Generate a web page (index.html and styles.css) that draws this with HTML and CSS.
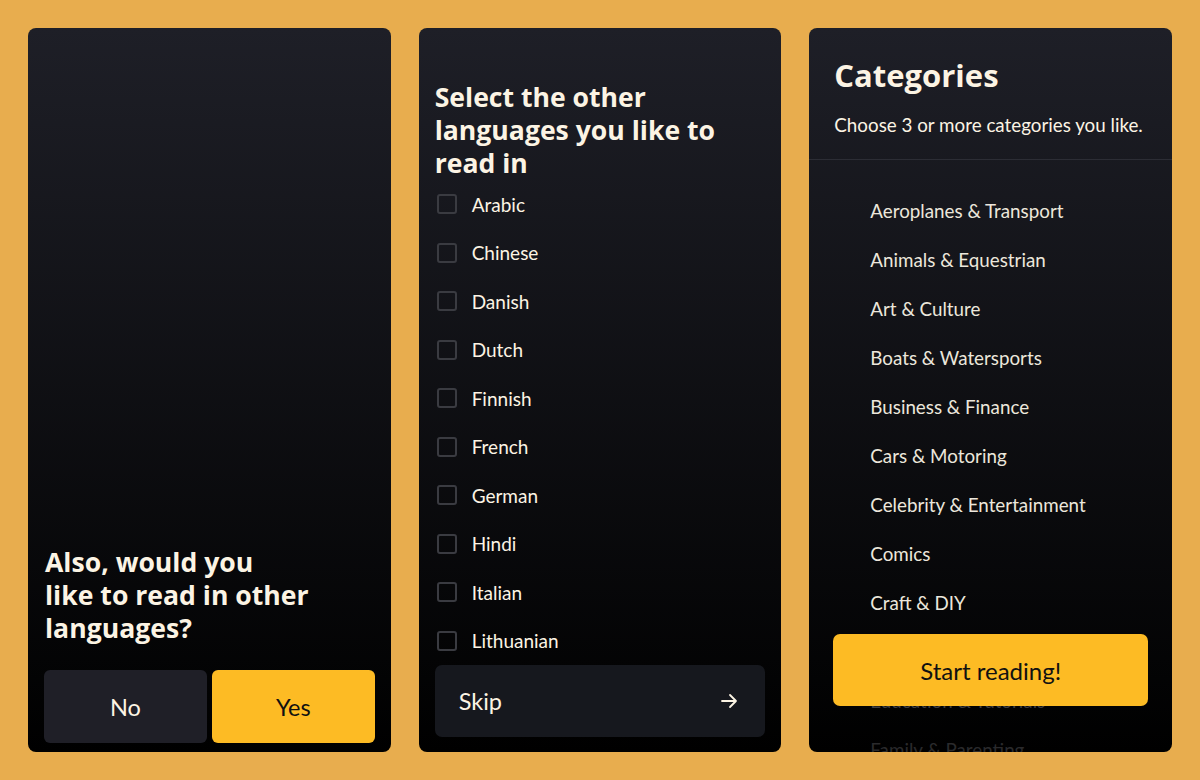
FILE: index.html
```html
<!DOCTYPE html>
<html lang="en">
<head>
  <meta charset="UTF-8" />
  <meta name="viewport" content="width=device-width, initial-scale=1.0"/>
  <title>Onboarding - Reader</title>
  <link rel="stylesheet" href="styles.css">
</head>
<body>
  <!-- step 1: ask about other languages -->
  <section class="panel ask-panel">
    <h2 class="ask-title">Also, would you<br>like to read in other<br>languages?</h2>
    <div class="ask-buttons">
      <button class="btn btn-dark">No</button>
      <button class="btn btn-yellow">Yes</button>
    </div>
  </section>

  <!-- step 2: pick languages -->
  <section class="panel lang-panel">
    <h2 class="lang-title">Select the other<br>languages you like to<br>read in</h2>
    <ul class="lang-list">
      <li><span class="checkbox"></span>Arabic</li>
      <li><span class="checkbox"></span>Chinese</li>
      <li><span class="checkbox"></span>Danish</li>
      <li><span class="checkbox"></span>Dutch</li>
      <li><span class="checkbox"></span>Finnish</li>
      <li><span class="checkbox"></span>French</li>
      <li><span class="checkbox"></span>German</li>
      <li><span class="checkbox"></span>Hindi</li>
      <li><span class="checkbox"></span>Italian</li>
      <li><span class="checkbox"></span>Lithuanian</li>
    </ul>
    <button class="skip-btn">
      <span>Skip</span>
      <svg width="18" height="18" viewBox="0 0 18 18" fill="none" stroke="currentColor" stroke-width="1.8" stroke-linecap="round" stroke-linejoin="round">
        <path d="M2 9h14M10 3l6 6-6 6"/>
      </svg>
    </button>
  </section>

  <!-- step 3: categories -->
  <section class="panel cat-panel">
    <div class="cat-head">
      <h2 class="cat-title">Categories</h2>
      <p class="cat-sub">Choose 3 or more categories you like.</p>
    </div>
    <ul class="cat-list">
      <li>Aeroplanes &amp; Transport</li>
      <li>Animals &amp; Equestrian</li>
      <li>Art &amp; Culture</li>
      <li>Boats &amp; Watersports</li>
      <li>Business &amp; Finance</li>
      <li>Cars &amp; Motoring</li>
      <li>Celebrity &amp; Entertainment</li>
      <li>Comics</li>
      <li>Craft &amp; DIY</li>
      <li class="hidden-row"></li>
      <li class="faded">Education &amp; Tutorials</li>
      <li class="faded more">Family &amp; Parenting</li>
    </ul>
    <button class="start-btn">Start reading!</button>
  </section>
</body>
</html>
```

FILE: styles.css
```css
* { box-sizing: border-box; margin: 0; padding: 0; }
body {
  background: #e8ad4e;
  font-family: Lato, "Open Sans", sans-serif;
  color: #fcf4e4;
  display: grid;
  grid-template-columns: repeat(3, minmax(0, 1fr));
  gap: 28px;
  padding: 28px;
  height: 780px;
}
h2 {
  font-family: "Open Sans", Lato, sans-serif;
  font-weight: 700;
}
.panel {
  height: 724px;
  border-radius: 8px;
  overflow: hidden;
  background: linear-gradient(#1e1f27, #000);
  display: flex;
  flex-direction: column;
  position: relative;
}
button {
  font-family: inherit;
  border: none;
  cursor: pointer;
}

/* panel 1 */
.ask-panel {
  justify-content: flex-end;
  padding: 0 16px 9px 16px;
}
.ask-title {
  font-size: 26.6px;
  line-height: 33px;
  margin-left: 1px;
  margin-bottom: 25px;
}
.ask-buttons {
  display: grid;
  grid-template-columns: 1fr 1fr;
  gap: 5px;
}
.btn {
  height: 73px;
  border-radius: 6px;
  font-size: 23.5px;
}
.btn-dark { background: #1f1f27; color: #fcf4e4; }
.btn-yellow { background: #fdbb24; color: #111; }

/* panel 2 */
.lang-panel {
  padding: 53px 16px 15px 16px;
}
.lang-title {
  font-size: 26.6px;
  line-height: 33px;
}
.lang-list {
  list-style: none;
  padding-left: 2px;
}
.lang-list li {
  height: 48.5px;
  display: flex;
  align-items: center;
  gap: 15px;
  font-size: 19px;
}
.checkbox {
  width: 20px;
  height: 20px;
  border: 2px solid #3a3b41;
  border-radius: 3px;
}
.skip-btn {
  height: 72px;
  border-radius: 7px;
  background: #16181e;
  color: #fcf4e4;
  display: flex;
  align-items: center;
  justify-content: space-between;
  padding: 0 27px 0 24px;
  font-size: 23.5px;
}

/* panel 3 */
.cat-head {
  padding: 28px 24px 23px 25px;
  border-bottom: 1px solid #2c2d35;
}
.cat-title {
  font-size: 31px;
  line-height: 38px;
}
.cat-sub {
  font-size: 18.8px;
  line-height: 23px;
  margin-top: 19px;
}
.cat-list {
  list-style: none;
  padding: 26px 0 0 61px;
}
.cat-list li {
  height: 49px;
  display: flex;
  align-items: center;
  font-size: 18.8px;
  color: #ece7dc;
}
.cat-list li.faded { color: #3e3e40; }
.cat-list li.more { color: #2a2a2c; }
.start-btn {
  position: absolute;
  left: 24px;
  right: 24px;
  bottom: 46px;
  height: 72px;
  border-radius: 7px;
  background: #fdbb24;
  color: #111;
  font-size: 24px;
}
```
